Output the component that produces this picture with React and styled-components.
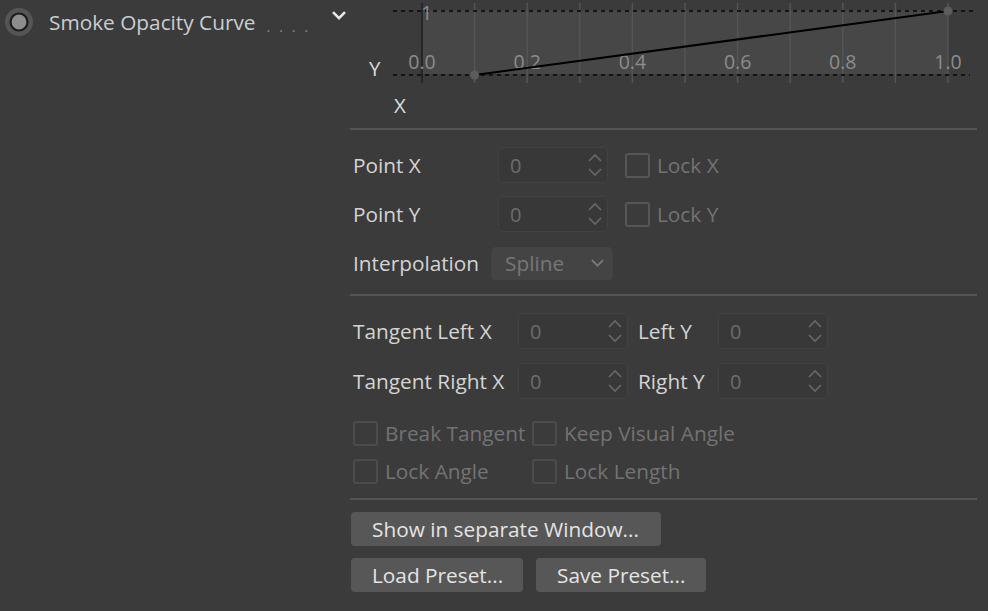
import React from "react";
import styled, { createGlobalStyle } from "styled-components";

const GlobalStyle = createGlobalStyle`
  html, body {
    margin: 0;
    padding: 0;
    background: #3b3b3b;
  }
  body {
    font-family: "Open Sans", "Noto Sans", sans-serif;
    color: #d4d4d4;
  }
`;

const Page = styled.div`
  width: 988px;
  height: 611px;
  display: flex;
  flex-direction: row;
  background: #3b3b3b;
  overflow: hidden;
`;

const Side = styled.div`
  width: 350px;
  flex-shrink: 0;
`;

const TitleRow = styled.div`
  height: 44px;
  display: flex;
  align-items: center;
  padding-left: 5px;

  & > svg {
    flex-shrink: 0;
  }
`;

const TitleText = styled.span`
  margin-left: 14px;
  font-size: 20.8px;
  color: #c9ced3;
  white-space: nowrap;
`;

const Leader = styled.span`
  margin-left: 11px;
  margin-top: 8px;
  font-size: 14px;
  letter-spacing: 9px;
  color: #8a8a8a;
`;

const Toggle = styled.div`
  margin-left: auto;
  margin-right: 3px;
  align-self: flex-start;
  margin-top: 10px;
  display: flex;
`;

const Panel = styled.div`
  width: 627px;
  display: flex;
  flex-direction: column;
`;

const Chart = styled.svg`
  display: block;
  width: 638px;
  height: 128px;
  margin-right: -11px;
`;

const Divider = styled.div`
  height: 2px;
  background: #545454;
`;

const Section = styled.div`
  display: flex;
  flex-direction: column;
  gap: ${(p) => p.$gap}px;
  padding: ${(p) => p.$pad};
`;

const Row = styled.div`
  display: flex;
  align-items: center;
  height: ${(p) => p.$h || 36}px;
`;

const Label = styled.span`
  box-sizing: border-box;
  width: ${(p) => p.$w}px;
  padding-left: ${(p) => p.$pl || 3}px;
  font-size: 20.8px;
  color: #d4d4d4;
  white-space: nowrap;
  flex-shrink: 0;
`;

const SpinBox = styled.div`
  width: 110px;
  height: 36px;
  box-sizing: border-box;
  border: 1px solid #424242;
  border-radius: 5px;
  background: #383838;
  display: flex;
  align-items: center;
  padding: 0 4px 0 11px;
  font-size: 20px;
  color: #6c6c6c;
  flex-shrink: 0;
`;

const SpinValue = styled.span`
  flex: 1;
`;

const Check = styled.label`
  display: flex;
  align-items: center;
  gap: 7px;
  margin-left: ${(p) => p.$ml || 0}px;
  width: ${(p) => (p.$w ? `${p.$w}px` : "auto")};
  font-size: 20.8px;
  color: #737373;
  white-space: nowrap;
  flex-shrink: 0;
`;

const Box = styled.span`
  width: 25px;
  height: 25px;
  flex-shrink: 0;
  box-sizing: border-box;
  border: 2px solid ${(p) => (p.$faint ? "#4c4c4c" : "#565656")};
  border-radius: 3px;
`;

const Dropdown = styled.div`
  width: 122px;
  height: 33px;
  box-sizing: border-box;
  border-radius: 5px;
  background: #444444;
  display: flex;
  align-items: center;
  justify-content: space-between;
  padding: 0 8px 0 14px;
  font-size: 20.8px;
  color: #777777;
`;

const ButtonRow = styled.div`
  display: flex;
  gap: 12px;
`;

const Button = styled.button`
  height: 34px;
  padding: 0 21px;
  border: none;
  border-radius: 4px;
  background: #575757;
  color: #e4e4e4;
  font-family: "Open Sans", "Noto Sans", sans-serif;
  font-size: 20.8px;
  margin-left: 1px;
  width: ${(p) => p.$w}px;
  text-align: left;
  white-space: nowrap;
`;

function RadioDot() {
  return (
    <svg width="30" height="30" viewBox="0 0 30 30">
      <circle cx="14" cy="15" r="14" fill="#555555" />
      <circle cx="14" cy="15" r="8.5" fill="#8d8d8d" stroke="#1c1c1c" strokeWidth="2.2" />
    </svg>
  );
}

function Chevron({ color = "#e8e8e8", size = 16, width = 2.6 }) {
  return (
    <svg width={size} height={size * 0.7} viewBox="0 0 16 11">
      <polyline points="2,2 8,8 14,2" fill="none" stroke={color} strokeWidth={width} />
    </svg>
  );
}

function SpinArrows() {
  return (
    <svg width="16" height="28" viewBox="0 0 16 28">
      <polyline points="2,10 8,4 14,10" fill="none" stroke="#686868" strokeWidth="1.6" />
      <polyline points="2,18 8,24 14,18" fill="none" stroke="#686868" strokeWidth="1.6" />
    </svg>
  );
}

function Spin({ value = "0" }) {
  return (
    <SpinBox>
      <SpinValue>{value}</SpinValue>
      <SpinArrows />
    </SpinBox>
  );
}

// curve editor: x axis 0..1 mapped onto 72..598, y onto 75..11
const X0 = 72;
const X1 = 598;
const sx = (v) => X0 + (X1 - X0) * v;
const sy = (v) => 75 - 64 * v;
const ticks = [0, 0.2, 0.4, 0.6, 0.8, 1.0];
const grid = Array.from({ length: 10 }, (_, i) => (i + 1) / 10);
const curve = [
  [0.1, 0],
  [1.0, 1],
];

function CurveChart() {
  return (
    <Chart viewBox="0 0 638 128">
      <rect x={X0} y="10" width={X1 - X0} height="64" fill="#474747" />
      {grid.map((g) => (
        <line key={g} x1={sx(g)} x2={sx(g)} y1="3" y2="83" stroke="#555555" strokeWidth="1.5" />
      ))}
      <line x1={X0} x2={X0} y1="3" y2="83" stroke="#262626" strokeWidth="2" />
      <line x1="43" x2="627" y1="11" y2="11" stroke="#141414" strokeWidth="2" strokeDasharray="4 4" />
      <line x1="43" x2="620" y1="75" y2="75" stroke="#141414" strokeWidth="2" strokeDasharray="4 4" />
      <text x="71" y="20" fontSize="20" fill="#8a8a8a" fontFamily="Open Sans, sans-serif">
        1
      </text>
      {ticks.map((t) => (
        <text
          key={t}
          x={sx(t)}
          y="69"
          fontSize="19.5"
          fill="#8c8c8c"
          textAnchor="middle"
          fontFamily="Open Sans, sans-serif"
        >
          {t.toFixed(1)}
        </text>
      ))}
      <text x="19" y="76" fontSize="20.5" fill="#dcdcdc" fontFamily="Open Sans, sans-serif">
        Y
      </text>
      <text x="44" y="113" fontSize="20.5" fill="#dcdcdc" fontFamily="Open Sans, sans-serif">
        X
      </text>
      <line
        x1={sx(curve[0][0])}
        y1={sy(curve[0][1])}
        x2={sx(curve[1][0])}
        y2={sy(curve[1][1])}
        stroke="#000000"
        strokeWidth="2"
      />
      {curve.map(([px, py]) => (
        <circle key={px} cx={sx(px)} cy={sy(py)} r="4.5" fill="#5c5c5c" />
      ))}
    </Chart>
  );
}

export default function App() {
  return (
    <Page>
      <GlobalStyle />
      <Side>
        <TitleRow>
          <RadioDot />
          <TitleText>Smoke Opacity Curve</TitleText>
          <Leader>....</Leader>
          <Toggle>
            <Chevron />
          </Toggle>
        </TitleRow>
      </Side>
      <Panel>
        <CurveChart />
        <Divider />
        <Section $gap={13} $pad="17px 0 13px 0">
          <Row>
            <Label $w={148}>Point X</Label>
            <Spin />
            <Check $ml={17}>
              <Box />
              Lock X
            </Check>
          </Row>
          <Row>
            <Label $w={148}>Point Y</Label>
            <Spin />
            <Check $ml={17}>
              <Box />
              Lock Y
            </Check>
          </Row>
          <Row>
            <Label $w={141}>Interpolation</Label>
            <Dropdown>
              Spline
              <Chevron color="#777777" size={15} width={2} />
            </Dropdown>
          </Row>
        </Section>
        <Divider />
        <Section $gap={14} $pad="17px 0 0 0">
          <Row>
            <Label $w={168}>Tangent Left X</Label>
            <Spin />
            <Label $w={90} $pl={10}>
              Left Y
            </Label>
            <Spin />
          </Row>
          <Row>
            <Label $w={168}>Tangent Right X</Label>
            <Spin />
            <Label $w={90} $pl={10}>
              Right Y
            </Label>
            <Spin />
          </Row>
        </Section>
        <Section $gap={12} $pad="21px 0 14px 3px">
          <Row $h={26}>
            <Check $w={179}>
              <Box $faint />
              Break Tangent
            </Check>
            <Check>
              <Box $faint />
              Keep Visual Angle
            </Check>
          </Row>
          <Row $h={26}>
            <Check $w={179}>
              <Box $faint />
              Lock Angle
            </Check>
            <Check>
              <Box $faint />
              Lock Length
            </Check>
          </Row>
        </Section>
        <Divider />
        <Section $gap={12} $pad="12px 0 0 0">
          <ButtonRow>
            <Button $w={310}>Show in separate Window...</Button>
          </ButtonRow>
          <ButtonRow>
            <Button $w={172}>Load Preset...</Button>
            <Button $w={170}>Save Preset...</Button>
          </ButtonRow>
        </Section>
      </Panel>
    </Page>
  );
}
